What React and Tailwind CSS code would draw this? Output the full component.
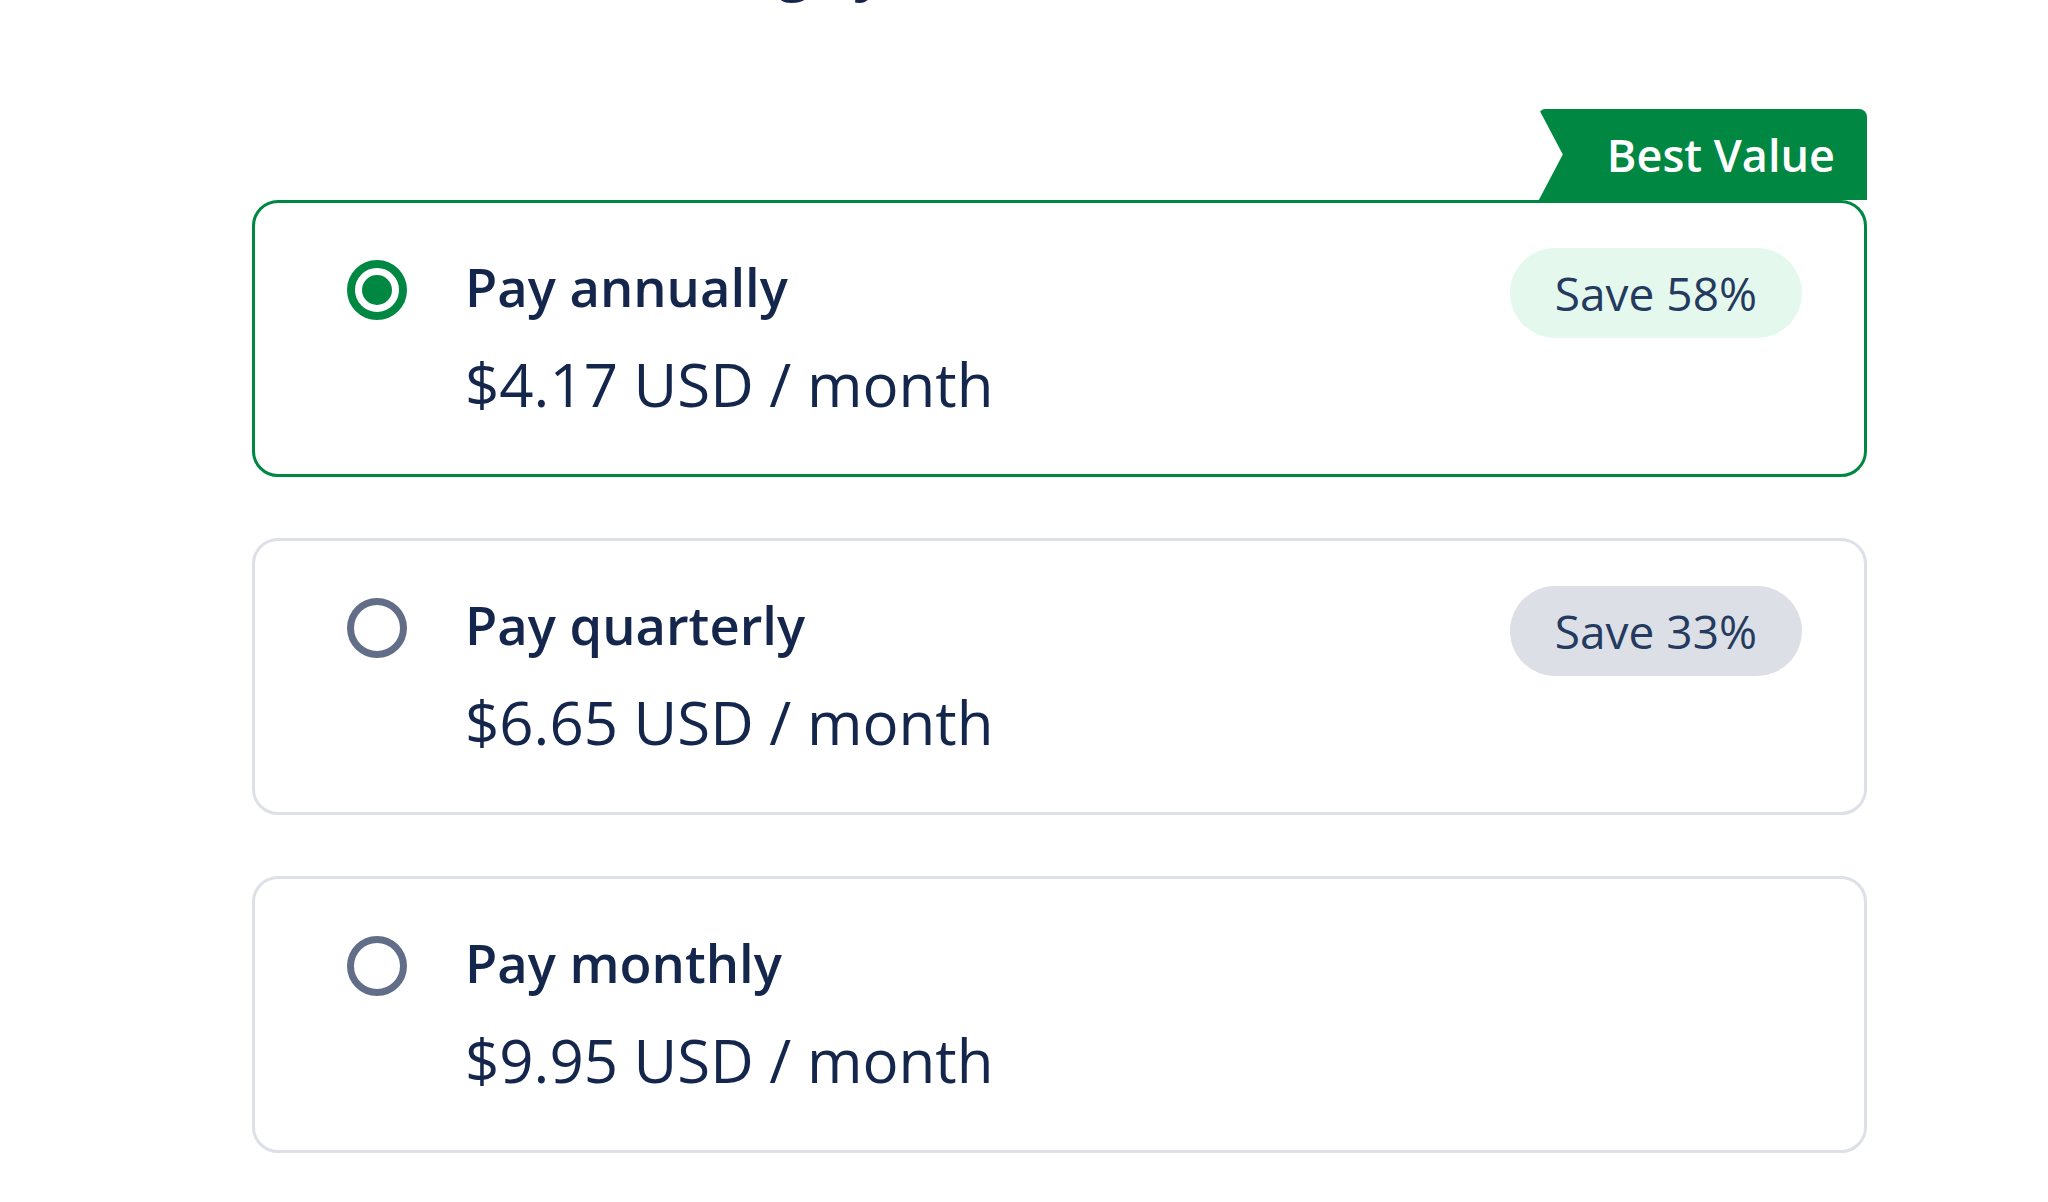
import { useState } from "react";

const plans = [
  { id: "annual", title: "Pay annually", price: "$4.17 USD / month", save: "Save 58%" },
  { id: "quarter", title: "Pay quarterly", price: "$6.65 USD / month", save: "Save 33%" },
  { id: "month", title: "Pay monthly", price: "$9.95 USD / month", save: null },
];

function Radio({ checked }) {
  if (checked) {
    return (
      <div className="mt-[9px] flex h-[60px] w-[60px] shrink-0 items-center justify-center rounded-full border-[8px] border-[#008742]">
        <div className="h-[30px] w-[30px] rounded-full bg-[#008742]" />
      </div>
    );
  }
  return <div className="mt-[9px] h-[60px] w-[60px] shrink-0 rounded-full border-[7px] border-[#626e88]" />;
}

function PlanCard({ plan, selected, onSelect }) {
  return (
    <button
      type="button"
      onClick={onSelect}
      className={
        "flex h-[277px] w-full items-start rounded-[26px] border-[3px] bg-white pt-[48px] pr-[62px] pl-[92px] text-left cursor-pointer " +
        (selected ? "border-[#008742]" : "border-[#dde0e7]")
      }
    >
      <Radio checked={selected} />
      <div className="ml-[58px] flex-1">
        <div className="text-[52.5px] leading-[72px] font-semibold text-[#14264b]">{plan.title}</div>
        <div className="mt-[25px] text-[60px] leading-[72px] font-normal text-[#14264b]">{plan.price}</div>
      </div>
      {plan.save && (
        <span
          className={
            "mt-[-3px] flex h-[90px] items-center rounded-full px-[45px] text-[46px] font-medium text-[#243a5e] " +
            (selected ? "bg-[#e5f8ee]" : "bg-[#dcdfe6]")
          }
        >
          {plan.save}
        </span>
      )}
    </button>
  );
}

export default function App() {
  const [selected, setSelected] = useState("annual");

  return (
    <div className="h-[1202px] w-full overflow-hidden bg-white font-['Open_Sans',sans-serif]">
      <h1 className="mt-[-60px] pl-[372px] text-[56px] leading-[56px] font-bold text-[#14264b]">
        Choose a billing cycle
      </h1>

      <div className="ml-[252px] w-[1615px]">
        {/* Best value ribbon */}
        <div className="mt-[113px] flex justify-end">
          <div className="flex h-[91px] items-center rounded-tr-[8px] rounded-tl-[6px] bg-[#008742] pr-[32px] pl-[68px] text-[45px] font-semibold text-white [clip-path:polygon(0_0,100%_0,100%_100%,0_100%,24px_50%)]">
            Best Value
          </div>
        </div>

        <div className="flex flex-col gap-[61px]">
          {plans.map(p => (
            <PlanCard key={p.id} plan={p} selected={selected === p.id} onSelect={() => setSelected(p.id)} />
          ))}
        </div>
      </div>
    </div>
  );
}
